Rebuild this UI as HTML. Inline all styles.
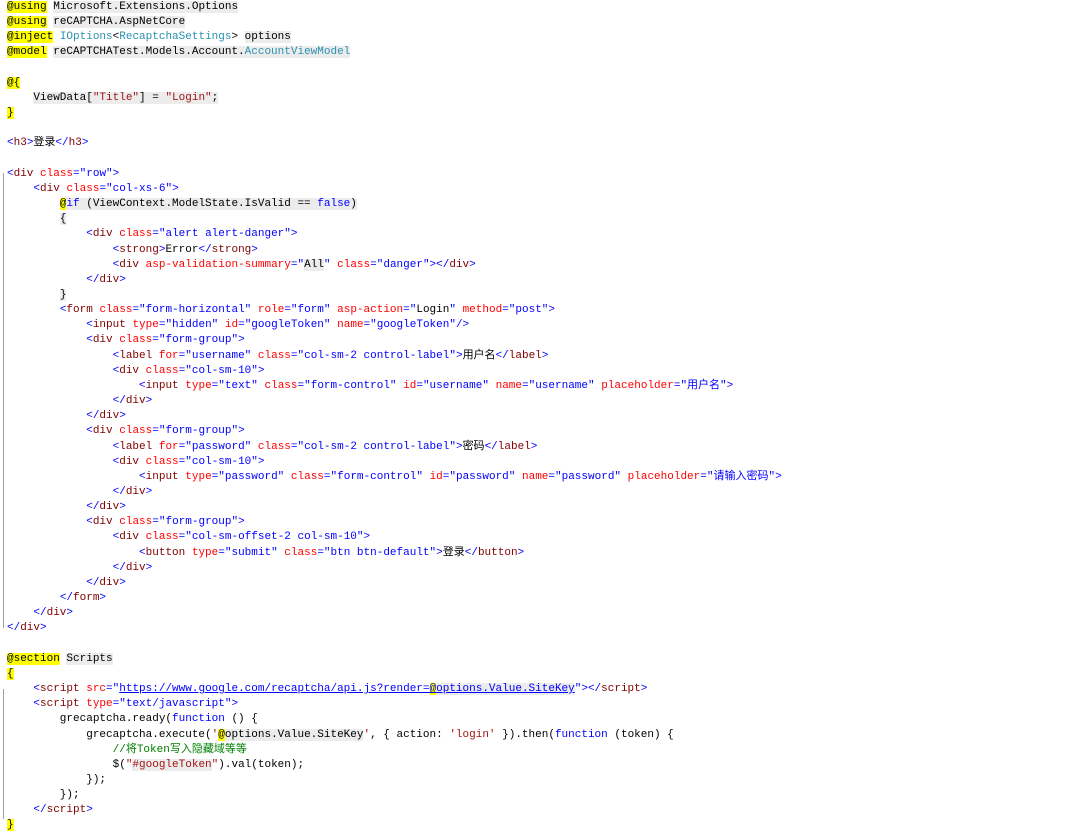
<!DOCTYPE html>
<html><head><meta charset="utf-8"><style>
html,body{margin:0;padding:0;background:#fff;width:1080px;height:829px;overflow:hidden}
pre{margin:0;position:absolute;left:7px;top:0;font-family:"Liberation Mono","Noto Sans CJK SC",monospace;font-size:11px;line-height:15.15px;color:#000}
.b{color:#0000ff}.t{color:#800000}.a{color:#ff0000}.y{background:#ffff00}.g{background:#ececec}.c{color:#008000}.tl{color:#2b91af}.r{color:#a31515}
.gut{position:absolute;left:3px;width:1px;background:#a0a0a0}
</style></head><body>
<div class="gut" style="top:173px;height:455px"></div>
<div class="gut" style="top:689px;height:130px"></div>
<pre><span class="y">@using</span> <span class="g">Microsoft.Extensions.Options</span>
<span class="y">@using</span> <span class="g">reCAPTCHA.AspNetCore</span>
<span class="y">@inject</span> <span class="tl">IOptions</span>&lt;<span class="tl">RecaptchaSettings</span>&gt; <span class="g">options</span>
<span class="y">@model</span> <span class="g">reCAPTCHATest.Models.Account.<span class="tl">AccountViewModel</span></span>

<span class="y">@{</span>
    <span class="g">ViewData[<span class="r">"Title"</span>] = <span class="r">"Login"</span>;</span>
<span class="y">}</span>

<span class="b">&lt;</span><span class="t">h3</span><span class="b">&gt;</span>登录<span class="b">&lt;/</span><span class="t">h3</span><span class="b">&gt;</span>

<span class="b">&lt;</span><span class="t">div</span> <span class="a">class</span><span class="b">="row"&gt;</span>
    <span class="b">&lt;</span><span class="t">div</span> <span class="a">class</span><span class="b">="col-xs-6"&gt;</span>
        <span class="y">@</span><span class="g"><span class="b">if</span> (ViewContext.ModelState.IsValid == <span class="b">false</span>)</span>
        <span class="g">{</span>
            <span class="b">&lt;</span><span class="t">div</span> <span class="a">class</span><span class="b">="alert alert-danger"&gt;</span>
                <span class="b">&lt;</span><span class="t">strong</span><span class="b">&gt;</span>Error<span class="b">&lt;/</span><span class="t">strong</span><span class="b">&gt;</span>
                <span class="b">&lt;</span><span class="t">div</span> <span class="a">asp-validation-summary</span><span class="b">="</span><span class="g">All</span><span class="b">"</span> <span class="a">class</span><span class="b">="danger"&gt;&lt;/</span><span class="t">div</span><span class="b">&gt;</span>
            <span class="b">&lt;/</span><span class="t">div</span><span class="b">&gt;</span>
        <span class="g">}</span>
        <span class="b">&lt;</span><span class="t">form</span> <span class="a">class</span><span class="b">="form-horizontal"</span> <span class="a">role</span><span class="b">="form"</span> <span class="a">asp-action</span><span class="b">="</span>Login<span class="b">"</span> <span class="a">method</span><span class="b">="post"&gt;</span>
            <span class="b">&lt;</span><span class="t">input</span> <span class="a">type</span><span class="b">="hidden"</span> <span class="a">id</span><span class="b">="googleToken"</span> <span class="a">name</span><span class="b">="googleToken"/&gt;</span>
            <span class="b">&lt;</span><span class="t">div</span> <span class="a">class</span><span class="b">="form-group"&gt;</span>
                <span class="b">&lt;</span><span class="t">label</span> <span class="a">for</span><span class="b">="username"</span> <span class="a">class</span><span class="b">="col-sm-2 control-label"&gt;</span>用户名<span class="b">&lt;/</span><span class="t">label</span><span class="b">&gt;</span>
                <span class="b">&lt;</span><span class="t">div</span> <span class="a">class</span><span class="b">="col-sm-10"&gt;</span>
                    <span class="b">&lt;</span><span class="t">input</span> <span class="a">type</span><span class="b">="text"</span> <span class="a">class</span><span class="b">="form-control"</span> <span class="a">id</span><span class="b">="username"</span> <span class="a">name</span><span class="b">="username"</span> <span class="a">placeholder</span><span class="b">="用户名"&gt;</span>
                <span class="b">&lt;/</span><span class="t">div</span><span class="b">&gt;</span>
            <span class="b">&lt;/</span><span class="t">div</span><span class="b">&gt;</span>
            <span class="b">&lt;</span><span class="t">div</span> <span class="a">class</span><span class="b">="form-group"&gt;</span>
                <span class="b">&lt;</span><span class="t">label</span> <span class="a">for</span><span class="b">="password"</span> <span class="a">class</span><span class="b">="col-sm-2 control-label"&gt;</span>密码<span class="b">&lt;/</span><span class="t">label</span><span class="b">&gt;</span>
                <span class="b">&lt;</span><span class="t">div</span> <span class="a">class</span><span class="b">="col-sm-10"&gt;</span>
                    <span class="b">&lt;</span><span class="t">input</span> <span class="a">type</span><span class="b">="password"</span> <span class="a">class</span><span class="b">="form-control"</span> <span class="a">id</span><span class="b">="password"</span> <span class="a">name</span><span class="b">="password"</span> <span class="a">placeholder</span><span class="b">="请输入密码"&gt;</span>
                <span class="b">&lt;/</span><span class="t">div</span><span class="b">&gt;</span>
            <span class="b">&lt;/</span><span class="t">div</span><span class="b">&gt;</span>
            <span class="b">&lt;</span><span class="t">div</span> <span class="a">class</span><span class="b">="form-group"&gt;</span>
                <span class="b">&lt;</span><span class="t">div</span> <span class="a">class</span><span class="b">="col-sm-offset-2 col-sm-10"&gt;</span>
                    <span class="b">&lt;</span><span class="t">button</span> <span class="a">type</span><span class="b">="submit"</span> <span class="a">class</span><span class="b">="btn btn-default"&gt;</span>登录<span class="b">&lt;/</span><span class="t">button</span><span class="b">&gt;</span>
                <span class="b">&lt;/</span><span class="t">div</span><span class="b">&gt;</span>
            <span class="b">&lt;/</span><span class="t">div</span><span class="b">&gt;</span>
        <span class="b">&lt;/</span><span class="t">form</span><span class="b">&gt;</span>
    <span class="b">&lt;/</span><span class="t">div</span><span class="b">&gt;</span>
<span class="b">&lt;/</span><span class="t">div</span><span class="b">&gt;</span>

<span class="y">@section</span> <span class="g">Scripts</span>
<span class="y">{</span>
    <span class="b">&lt;</span><span class="t">script</span> <span class="a">src</span><span class="b">="<u>https://www.google.com/recaptcha/api.js?render=<span class="y">@</span><span class="g">options.Value.SiteKey</span></u>"&gt;&lt;/</span><span class="t">script</span><span class="b">&gt;</span>
    <span class="b">&lt;</span><span class="t">script</span> <span class="a">type</span><span class="b">="text/javascript"&gt;</span>
        grecaptcha.ready(<span class="b">function</span> () {
            grecaptcha.execute(<span class="r">'</span><span class="y">@</span><span class="g">options.Value.SiteKey</span><span class="r">'</span>, { action: <span class="r">'login'</span> }).then(<span class="b">function</span> (token) {
                <span class="c">//将Token写入隐藏域等等</span>
                $(<span class="r">"<span class="g">#googleToken</span>"</span>).val(token);
            });
        });
    <span class="b">&lt;/</span><span class="t">script</span><span class="b">&gt;</span>
<span class="y">}</span></pre>
</body></html>
